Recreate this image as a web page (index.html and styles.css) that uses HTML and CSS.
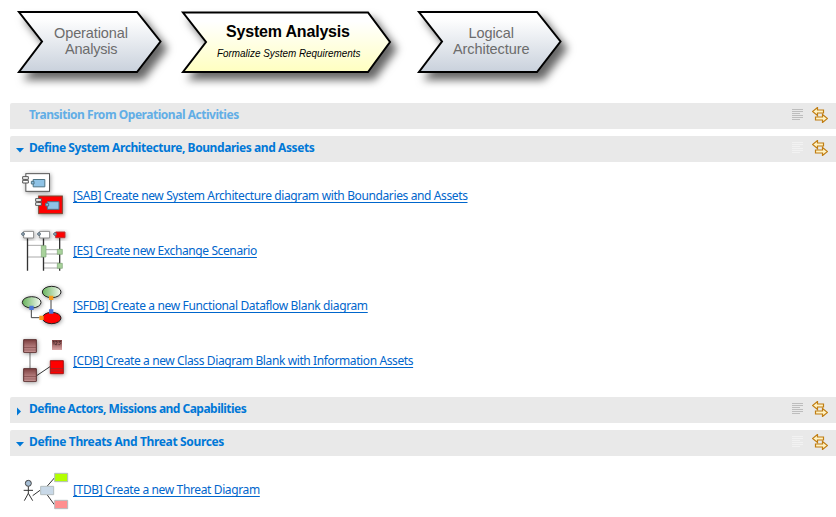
FILE: index.html
```
<!DOCTYPE html>
<html lang="en">
<head>
<meta charset="utf-8">
<title>System Analysis</title>
<link rel="stylesheet" href="styles.css">
</head>
<body>
<svg width="0" height="0" class="defs">
  <defs>
    <linearGradient id="steel" x1="0" y1="0" x2="0" y2="1"><stop offset="0.1" stop-color="#fff"/><stop offset="1" stop-color="#c9d1dc"/></linearGradient>
    <linearGradient id="cream" x1="0" y1="0" x2="0" y2="1"><stop offset="0.15" stop-color="#fff"/><stop offset="1" stop-color="#ffffc0"/></linearGradient>
    <linearGradient id="green" x1="0" y1="0" x2="1" y2="0"><stop offset="0" stop-color="#68b35c"/><stop offset="1" stop-color="#f4faf2"/></linearGradient>
    <linearGradient id="maroon" x1="0" y1="0" x2="0" y2="1"><stop offset="0" stop-color="#7c3f3f"/><stop offset="1" stop-color="#dba6a6"/></linearGradient>
    <filter id="cast" x="-20%" y="-20%" width="150%" height="170%"><feDropShadow dx="6" dy="7" stdDeviation="4.500" flood-color="#000" flood-opacity="0.6"/></filter>
    <filter id="soft" x="-30%" y="-30%" width="170%" height="170%"><feDropShadow dx="2" dy="3" stdDeviation="7" flood-color="#000" flood-opacity="0.4"/></filter>
    <symbol id="lines" viewBox="0 0 11 11"><path d="M0 .5h11M0 2.5h11M0 4.5h8M0 6.5h11M0 8.5h11M0 10.5h8" stroke="currentColor"/></symbol>
    <symbol id="swap" viewBox="0 0 16 16"><path d="M5.500.5L.5 4.500l5 4v-2.500h6v-3h-6zM10.500 7.500l5 4-5 4v-2.500h-7v-3h7z" fill="#fff3c4" stroke="#c07d12" stroke-width="1.200"/></symbol>
  </defs>
</svg>
<header class="steps">
  <svg width="836" height="103" viewBox="0 0 836 103">
    <g stroke="#000" stroke-width="2">
      <path filter="url(#cast)" fill="url(#steel)" d="M19 12H137L160.500 41.500L137 72H19L42 41.500Z"/>
      <path filter="url(#cast)" fill="url(#cream)" d="M183 12.500H368L390 42L368 72H183L206 42Z"/>
      <path filter="url(#cast)" fill="url(#steel)" d="M419 12H537L560.500 41.500L537 72H419L442 41.500Z"/>
    </g>
    <g class="step-label">
      <text x="54" y="38" textLength="74">Operational</text>
      <text x="65" y="54" textLength="52.500">Analysis</text>
      <text x="468.500" y="38" textLength="45.500">Logical</text>
      <text x="453" y="54" textLength="76.500">Architecture</text>
    </g>
    <text class="step-current" x="226" y="37.300" textLength="124">System Analysis</text>
    <text class="step-note" x="217" y="57" textLength="143.500" lengthAdjust="spacingAndGlyphs">Formalize System Requirements</text>
  </svg>
</header>
<main>
  <section>
    <h2 class="bar disabled"><span class="arrow"></span><span class="title t1">Transition From Operational Activities</span><svg class="lines"><use href="#lines"/></svg><svg class="swap"><use href="#swap"/></svg></h2>
  </section>
  <section>
    <h2 class="bar open"><span class="arrow"><svg width="8" height="5"><path d="M0 0h8L4 4.500z" fill="#0078d7"/></svg></span><span class="title t2">Define System Architecture, Boundaries and Assets</span><svg class="lines"><use href="#lines"/></svg><svg class="swap"><use href="#swap"/></svg></h2>
    <ul>
      <li>
        <svg class="icon" viewBox="0 9 189 165">
          <g filter="url(#soft)"><rect x="47.500" y="26" width="71" height="53" fill="#fff" stroke="#555" stroke-width="3"/><rect x="86" y="93" width="71" height="53" fill="#f00" stroke="#754a35" stroke-width="3"/></g>
          <g fill="#fff" stroke="#555" stroke-width="3"><path d="M38 35h17v8H38zM38 46h17v8H38z"/><path d="M77 101h17v8H77zM77 113h17v8H77z"/></g>
          <g fill="#8fc3e6" stroke="#4e7485" stroke-width="3"><path d="M69.500 43.500h35v22h-35zM112 110h35v23h-35z"/><path d="M64 49h8v8h-8zM107 115h9v8h-9z"/></g>
        </svg>
        <a class="l1" href="#">[SAB] Create new System Architecture diagram with Boundaries and Assets</a>
      </li>
      <li>
        <svg class="icon" viewBox="0 3 189 165">
          <path d="M52 70h48M52 105h48M101 83h48M101 96h48M101 123h48M101 138h48" fill="none" stroke="#aaa" stroke-width="3"/>
          <path d="M52.500 48v98M100.500 48v98M149 48v98" stroke="#333" stroke-width="4"/>
          <g filter="url(#soft)" stroke="#888" stroke-width="3"><path fill="#fff" d="M41 28h30v20H41zM89 28h30v20H89z"/><path fill="#f00" stroke="#b33" d="M137 30h28v17h-28z"/></g>
          <g fill="#a8d29b" stroke="#7da475" stroke-width="2"><path d="M94 71h14v34H94zM142 82h15v15h-15zM142 124h15v15h-15z"/></g>
          <g fill="#b8cbd8" stroke="#536574" stroke-width="3"><circle cx="39" cy="36" r="4"/><circle cx="87" cy="36" r="4"/><circle cx="135" cy="36" r="4"/></g>
        </svg>
        <a class="l2" href="#">[ES] Create new Exchange Scenario</a>
      </li>
      <li>
        <svg class="icon" viewBox="0 0 189 165">
          <g filter="url(#soft)" stroke="#222" stroke-width="3"><ellipse cx="125" cy="42" rx="28" ry="17" fill="url(#green)"/><ellipse cx="65" cy="73" rx="28" ry="17" fill="url(#green)"/><ellipse cx="125" cy="120" rx="28" ry="17" fill="#f00"/></g>
          <path d="M123 64v32M64 92v27h25" fill="none" stroke="#444" stroke-width="3"/>
          <path d="M58 83h13v13H58zM117 94h13v13h-13z" fill="#4b75d6"/><path d="M117 53h13v13h-13zM88 113h13v13H88z" fill="#f49b20"/>
        </svg>
        <a class="l3" href="#">[SFDB] Create a new Functional Dataflow Blank diagram</a>
      </li>
      <li>
        <svg class="icon" viewBox="0 3 189 165">
          <path d="M60 63v47" stroke="#aaa" stroke-width="5"/><path d="M80 131l40-27" stroke="#333" stroke-width="3"/>
          <g filter="url(#soft)"><path fill="url(#maroon)" stroke="#5b3030" stroke-width="3" d="M41 23h38v38H41z"/><path fill="url(#maroon)" stroke="#5b3030" stroke-width="3" d="M41 110h38v38H41z"/><path fill="#f00" stroke="#a31818" stroke-width="3" d="M121 86h39v39h-39z"/></g>
          <path d="M41 47h38M41 54h38M41 134h38M41 141h38M121 110h39M121 117h39" stroke="#703d3d" stroke-width="2"/>
          <path fill="url(#maroon)" d="M126 24h30v30h-30z"/><path d="M129 29l3-2v11M136 28h5v4l-5 6h6M146 28h6l-3 4 3 3-3 3h-4" fill="none" stroke="#382020" stroke-width="2"/>
        </svg>
        <a class="l4" href="#">[CDB] Create a new Class Diagram Blank with Information Assets</a>
      </li>
    </ul>
  </section>
  <section>
    <h2 class="bar"><span class="arrow"><svg width="8" height="9"><path d="M1 0.500v8L5 4.500z" fill="#0078d7"/></svg></span><span class="title t3">Define Actors, Missions and Capabilities</span><svg class="lines"><use href="#lines"/></svg><svg class="swap"><use href="#swap"/></svg></h2>
  </section>
  <section>
    <h2 class="bar open"><span class="arrow"><svg width="8" height="5"><path d="M0 0h8L4 4.500z" fill="#0078d7"/></svg></span><span class="title t4">Define Threats And Threat Sources</span><svg class="lines"><use href="#lines"/></svg><svg class="swap"><use href="#swap"/></svg></h2>
    <ul>
      <li>
        <svg class="icon" viewBox="0 0 189 165">
          <g fill="none" stroke="#333" stroke-width="3"><path d="M55 73v22M41 85h28M55 94l-12 22M55 94l13 22M68 101l22-16M112 72l21-24M112 99l21 29"/></g>
          <circle cx="55" cy="64" r="9" fill="#a5bdd4" stroke="#444" stroke-width="3"/>
          <g stroke="#b4bdbf" stroke-width="3"><path fill="#c9d9e8" d="M92 73h39v25H92z"/><path fill="#b3ff00" d="M134 34h39v25h-39z"/><path fill="#ff8f8f" d="M134 115h39v25h-39z"/></g>
        </svg>
        <a class="l5" href="#">[TDB] Create a new Threat Diagram</a>
      </li>
    </ul>
  </section>
</main>
</body>
</html>
```
FILE: styles.css
```
body { margin: 0; background: #fff; overflow: hidden; font-family: "Noto Sans", "Open Sans", sans-serif; font-size: 12px; }
.defs { position: absolute; }
.steps { height: 103px; }
.steps svg { display: block; }
.step-label { font: 14.5px "Liberation Sans", sans-serif; fill: #6c6c6c; }
.step-current { font: bold 16px "Liberation Sans", sans-serif; }
.step-note { font: italic 10px "Liberation Sans", sans-serif; }
main { display: flex; flex-direction: column; gap: 7px; padding-left: 10px; }
.bar { display: flex; align-items: center; height: 26px; margin: 0; padding-right: 8px; background: #e9e9e9; color: #0078d7; font-size: 12px; line-height: 26px; border-top-left-radius: 2px; box-sizing: border-box; }
.arrow { width: 19px; display: flex; padding-left: 6px; box-sizing: border-box; }
.arrow svg { margin-top: 2px; }
.title { flex: 1; white-space: nowrap; margin-top: -2px; }
.t1 { letter-spacing: -0.47px; }
.t2 { letter-spacing: -0.42px; }
.t3 { letter-spacing: -0.52px; }
.t4 { letter-spacing: -0.35px; }
.disabled .title { color: #62aee6; }
.lines { width: 11px; height: 11px; margin: -3px 9px 0 0; color: #bdbdbd; }
.open .lines { color: #f2f2f2; }
.swap { width: 16px; height: 16px; margin-top: -2px; }
ul { list-style: none; margin: 0; padding: 6px 0 2px; }
li { display: flex; align-items: center; height: 55px; }
.icon { width: 63px; height: 55px; flex: none; }
a { color: #0066cc; white-space: nowrap; line-height: 16px; text-decoration: underline; text-underline-offset: 2px; text-decoration-thickness: 1px; text-decoration-skip-ink: none; }
.l1 { letter-spacing: -0.38px; }
.l2 { letter-spacing: -0.39px; }
.l3 { letter-spacing: -0.36px; }
.l4 { letter-spacing: -0.39px; }
.l5 { letter-spacing: -0.37px; }
```
